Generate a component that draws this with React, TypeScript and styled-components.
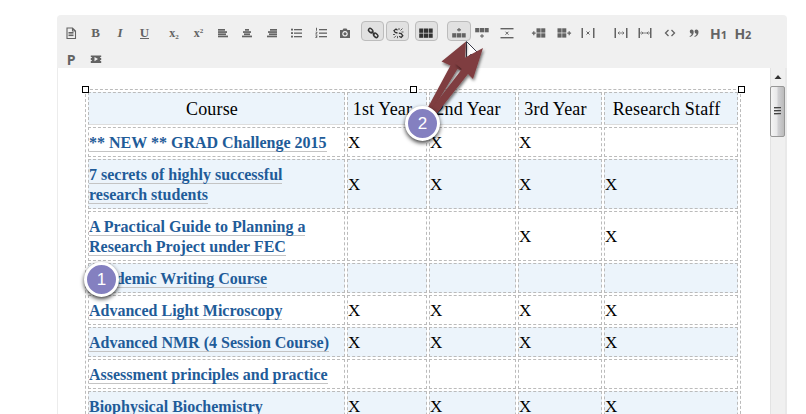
import React from "react";
import styled, { createGlobalStyle } from "styled-components";

const GlobalStyle = createGlobalStyle`
  * { box-sizing: border-box; }
  html, body { margin: 0; padding: 0; background: #fff; overflow: hidden; }
`;

const Page = styled.main`
  position: relative;
  width: 806px;
  height: 414px;
  padding: 15px 0 0 57px;
  overflow: hidden;
  background: #fff;
`;

const Editor = styled.section`
  width: 730px;
  height: 399px;
  display: flex;
  flex-direction: column;
`;

const Toolbar = styled.header`
  height: 53px;
  flex: none;
  padding: 6px 0 0 2px;
  background: #f0f0f0;
  border-radius: 4px 4px 0 0;
`;

const ToolRow = styled.div<{ $gap?: number }>`
  display: flex;
  height: 20px;
  margin-bottom: ${(p) => p.$gap ?? 0}px;
`;

const Tool = styled.button<{ $lead?: number; $active?: boolean }>`
  flex: none;
  width: ${(p) => (p.$active ? 23.5 : 24.45)}px;
  height: ${(p) => (p.$active ? 20 : 24)}px;
  margin: 0 0 0 ${(p) => p.$lead ?? 0}px;
  padding: ${(p) => (p.$active ? "3px 0 0" : "4px 0 0")};
  display: flex;
  align-items: flex-start;
  justify-content: center;
  border: ${(p) => (p.$active ? "1px solid #bcbcbc" : "0")};
  border-radius: 4px;
  background: ${(p) => (p.$active ? "#e1e1e1" : "transparent")};
  color: #636363;
`;

const Glyph = styled.svg<{ $dark?: boolean }>`
  display: block;
  width: 16px;
  height: 16px;
  flex: none;
  overflow: visible;
  color: ${(p) => (p.$dark ? "#333" : "inherit")};
  fill: currentColor;
  stroke: none;
`;

const Letter = styled.span<{ $italic?: boolean; $underline?: boolean; $weight?: number }>`
  font: ${(p) => (p.$italic ? "italic" : "normal")} ${(p) => p.$weight ?? 700} 13px/16px "Liberation Serif", serif;
  border-bottom: ${(p) => (p.$underline ? "1px solid #666" : "0")};
  height: ${(p) => (p.$underline ? 14 : 16)}px;
`;

const Script = styled.span<{ $raise?: boolean }>`
  font: bold 12px/17px "Liberation Serif", serif;
  small {
    position: relative;
    top: ${(p) => (p.$raise ? -4 : 2)}px;
    font-size: 7px;
    line-height: 0;
  }
`;

const Heading = styled.span`
  font: bold 14px/17px "Open Sans", sans-serif;
  small { font-size: 11px; }
`;

const Body = styled.div`
  flex: 1;
  min-height: 0;
  display: flex;
  justify-content: space-between;
  border-left: 1px solid #ececec;
`;

const Content = styled.div`
  position: relative;
  padding: 21px 0 0 27px;
`;

const CourseTable = styled.table`
  width: 656px;
  table-layout: fixed;
  border: 1px dashed #bbb;
  border-collapse: separate;
  border-spacing: 2px;
  font-family: "Liberation Serif", serif;
  color: #000;
`;

const Row = styled.tr<{ $tinted?: boolean; $height: number }>`
  height: ${(p) => p.$height}px;
  background: ${(p) => (p.$tinted ? "#ecf4fb" : "#fff")};
`;

const HeadCell = styled.th`
  padding: 1px 9px 0 0;
  border: 1px dashed #bbb;
  border-bottom: 1px solid #ddd;
  font-size: 18px;
  font-weight: 400;
  line-height: 20px;
  letter-spacing: 0.18px;
  text-align: center;
  white-space: nowrap;
`;

const Cell = styled.td`
  padding: 2px 0 0;
  border: 1px dashed #bbb;
  font-size: 17px;
  line-height: 20px;
  vertical-align: middle;
  white-space: nowrap;
`;

const CourseLink = styled.a`
  border-bottom: 1px solid #c4c4c4;
  color: #1f5c99;
  font-size: 16px;
  font-weight: 700;
  text-decoration: none;
`;

const Handle = styled.i<{ $x: number }>`
  position: absolute;
  top: 18px;
  left: ${(p) => p.$x}px;
  width: 7px;
  height: 7px;
  border: 1px solid #000;
  background: #fff;
`;

const Scrollbar = styled.div`
  width: 17px;
  display: flex;
  flex-direction: column;
  align-items: flex-start;
  border-left: 1px solid #e3e3e3;
  border-right: 2px solid #e9e9e9;
  background: #f0f0f0;
`;

const ScrollUp = styled.svg`
  width: 15px;
  height: 18px;
  display: block;
  flex: none;
`;

const Thumb = styled.div`
  width: 15px;
  height: 51px;
  margin-left: -1px;
  padding: 20px 3px 0;
  display: flex;
  flex-direction: column;
  gap: 1px;
  border: 1px solid #979797;
  border-radius: 2px;
  background: linear-gradient(90deg, #f5f5f5, #e8e8e9 45%, #d0d0d3 55%, #bbb);
`;

const Grip = styled.i`
  width: 7px;
  height: 2px;
  border-top: 1px solid #444;
  background: #aaa;
`;

const Marker = styled.b<{ $x: number; $y: number }>`
  position: absolute;
  left: ${(p) => p.$x - 17.5}px;
  top: ${(p) => p.$y - 17.5}px;
  width: 35px;
  height: 35px;
  border: 3px solid #fff;
  border-radius: 50%;
  background: #8480c0;
  box-shadow: 0 2px 4px rgba(0, 0, 0, 0.75);
  color: #fff;
  font: 17px/29px "Liberation Sans", sans-serif;
  text-align: center;
`;

const Arrows = styled.svg`
  position: absolute;
  left: 410px;
  top: 30px;
  width: 90px;
  height: 105px;
  pointer-events: none;
`;

const stroke = { fill: "none", stroke: "currentColor" };

function Bars({ xs, ws }: { xs: number[]; ws: number[] }) {
  return (
    <Glyph viewBox="0 0 16 16">
      {xs.map((x, i) => (
        <rect key={i} x={x} y={4 + i * 2.2} width={ws[i]} height="1.7" />
      ))}
    </Glyph>
  );
}

function Cells({ x, y, cols, rows }: { x: number; y: number; cols: number; rows: number }) {
  return (
    <>
      {Array.from({ length: cols * rows }, (_, i) => (
        <rect key={i} x={x + (i % cols) * 4.7} y={y + Math.floor(i / cols) * 5} width="4.1" height="4.3" />
      ))}
    </>
  );
}

function ListIcon({ numbered }: { numbered?: boolean }) {
  return (
    <Glyph viewBox="0 0 16 16">
      {[4, 7.5, 11].map((y, i) => (
        <g key={y}>
          <rect x="6" y={y} width="8" height="1.3" />
          {numbered ? (
            <path d={i === 0 ? "M3 2.8h1v3H3z" : `M2.4 ${y - 0.8}h2v1.2L3.3 ${y + 1.4}h1.1v.7h-2v-.9l1.1-1.4H2.4z`} />
          ) : (
            <rect x="3" y={y - 0.3} width="2" height="1.8" />
          )}
        </g>
      ))}
    </Glyph>
  );
}

function ColumnMark({ kind }: { kind: "delete" | "split" | "merge" }) {
  return (
    <Glyph viewBox="0 0 16 16">
      <rect x="1.5" y="3" width="1.5" height="10" />
      <rect x="13" y="3" width="1.5" height="10" />
      {kind === "delete" && <path {...stroke} d="M6.5 6.5l3 3M9.5 6.5l-3 3" />}
      {kind === "split" && <path {...stroke} strokeWidth=".8" d="M5 8h6M6.5 6.5L5 8l1.5 1.5M9.5 6.5L11 8 9.5 9.5" />}
      {kind === "merge" && <path {...stroke} strokeWidth=".8" d="M3 8h10M4.5 6.5L6 8 4.5 9.5M11.5 6.5L10 8l1.5 1.5" />}
    </Glyph>
  );
}

function EditorToolbar() {
  return (
    <Toolbar>
      <ToolRow $gap={6}>
        <Tool aria-label="Source">
          <Glyph viewBox="0 0 16 16">
            <path {...stroke} strokeWidth="1.1" d="M4 3h5.5L12.5 6v7.5H4zM9.5 3v3h3" />
            <rect x="5.5" y="7" width="5" height="1.6" /><rect x="5.5" y="9.5" width="5" height="1.6" />
          </Glyph>
        </Tool>
        <Tool><Letter>B</Letter></Tool>
        <Tool><Letter $italic>I</Letter></Tool>
        <Tool><Letter $underline>U</Letter></Tool>
        <Tool $lead={5}><Script>x<small>2</small></Script></Tool>
        <Tool><Script $raise>x<small>2</small></Script></Tool>
        <Tool aria-label="Align left"><Bars xs={[3, 3, 3, 3]} ws={[7, 9, 8, 10]} /></Tool>
        <Tool aria-label="Align centre"><Bars xs={[6, 4, 5, 3]} ws={[4, 8, 6, 10]} /></Tool>
        <Tool aria-label="Align right"><Bars xs={[6, 4, 5, 3]} ws={[7, 9, 8, 10]} /></Tool>
        <Tool aria-label="Bulleted list"><ListIcon /></Tool>
        <Tool aria-label="Numbered list"><ListIcon numbered /></Tool>
        <Tool aria-label="Image">
          <Glyph viewBox="0 0 16 16">
            <path fillRule="evenodd" d="M3 5h2.5l1-1.5h3l1 1.5H13v8H3zM8 6a2.8 2.8 0 1 0 .01 0zM8 7.2a1.6 1.6 0 1 1-.01 0z" />
          </Glyph>
        </Tool>
        <Tool $lead={3.5} $active aria-label="Link">
          <Glyph viewBox="0 0 16 16" $dark>
            <g {...stroke} strokeWidth="1.5">
              <rect x="3.2" y="4" width="5" height="3.2" rx="1.6" transform="rotate(43 5.7 5.6)" />
              <rect x="8.2" y="8.7" width="5" height="3.2" rx="1.6" transform="rotate(43 10.7 10.3)" />
              <path d="M6.5 6.5l3.2 3" />
            </g>
          </Glyph>
        </Tool>
        <Tool $lead={1.7} $active aria-label="Unlink">
          <Glyph viewBox="0 0 16 16" $dark>
            <path {...stroke} strokeWidth="1.3" d="M7.5 5.2L6 4 4 5.6 5.2 7.5 7.5 8M8.8 8.2l2.4.4 1.6 2.2-1.6 1.7-2-1.2" />
            <path {...stroke} strokeWidth=".8" d="M9 3v2M12.5 3.5L10.5 5.5M13.5 7H11.5M3 9.5h2M4 12.8L6 10.8M7.5 11.2v2" />
          </Glyph>
        </Tool>
        <Tool $lead={5.3} $active aria-label="Table">
          <Glyph viewBox="0 0 16 16" $dark><Cells x={1.2} y={3.5} cols={3} rows={2} /></Glyph>
        </Tool>
        <Tool $lead={9.2} $active aria-label="Insert row above">
          <Glyph viewBox="0 0 16 16"><Cells x={1.2} y={8.2} cols={3} rows={1} /><path d="M7.4 3h1.2v1.2H10v1.2H8.6v1.2H7.4V5.4H6V4.2h1.4z" /></Glyph>
        </Tool>
        <Tool $lead={-0.8} aria-label="Insert row below">
          <Glyph viewBox="0 0 16 16"><Cells x={1.2} y={3} cols={3} rows={1} /><path d="M7.4 9.2h1.2v1.2H10v1.2H8.6v1.2H7.4v-1.2H6v-1.2h1.4z" /></Glyph>
        </Tool>
        <Tool aria-label="Delete row">
          <Glyph viewBox="0 0 16 16">
            <rect x="1.5" y="3" width="13" height="1.4" /><rect x="1.5" y="12" width="13" height="1.4" />
            <path {...stroke} d="M6.5 6.7l3 3M9.5 6.7l-3 3" />
          </Glyph>
        </Tool>
        <Tool $lead={8.2} aria-label="Insert column before">
          <Glyph viewBox="0 0 16 16"><Cells x={5.5} y={3.3} cols={2} rows={2} /><path d="M2.2 6.2h1.2v1.4h1.3v1.2H3.4v1.4H2.2V8.8H.9V7.6h1.3z" /></Glyph>
        </Tool>
        <Tool aria-label="Insert column after">
          <Glyph viewBox="0 0 16 16"><Cells x={1.5} y={3.3} cols={2} rows={2} /><path d="M12.6 6.2h1.2v1.4h1.3v1.2h-1.3v1.4h-1.2V8.8h-1.3V7.6h1.3z" /></Glyph>
        </Tool>
        <Tool aria-label="Delete column"><ColumnMark kind="delete" /></Tool>
        <Tool $lead={8} aria-label="Split cell"><ColumnMark kind="split" /></Tool>
        <Tool aria-label="Merge cells"><ColumnMark kind="merge" /></Tool>
        <Tool aria-label="Code"><Glyph viewBox="0 0 16 16"><path {...stroke} strokeWidth="1.3" d="M6.5 5l-3 3 3 3M9.5 5l3 3-3 3" /></Glyph></Tool>
        <Tool aria-label="Quote">
          <Glyph viewBox="0 0 16 16">
            <path d="M5.6 4.5c1.4 0 2.1 1 2.1 2.4 0 2.6-1.5 4.3-3.8 5l-.3-.8c1.3-.6 2.1-1.4 2.2-2.4C4.600 8.700 3.800 7.800 3.800 6.600 3.800 5.400 4.500 4.500 5.600 4.500zM10.400 4.500c1.400 0 2.100 1 2.100 2.400 0 2.600-1.500 4.300-3.800 5l-.3-.8c1.300-.6 2.100-1.400 2.200-2.400-1.200 0-2-.9-2-2.100 0-1.200.7-2.100 1.800-2.100z" />
          </Glyph>
        </Tool>
        <Tool><Heading>H<small>1</small></Heading></Tool>
        <Tool><Heading>H<small>2</small></Heading></Tool>
      </ToolRow>
      <ToolRow>
        <Tool><Heading>P</Heading></Tool>
        <Tool aria-label="Video">
          <Glyph viewBox="0 0 16 16">
            <path fillRule="evenodd" d="M2.800 4.500h10.400v1.500h-1v1h1v2h-1v1h1v2H2.800v-2h1V9h-1V7h1V6h-1zM6.500 6v4.200L10 8.100z" />
          </Glyph>
        </Tool>
      </ToolRow>
    </Toolbar>
  );
}

const columnWidths = [257, 80, 87, 84, 134];
const headings = ["Course", "1st Year", "2nd Year", "3rd Year", "Research Staff"];

const courses: { lines: string[]; marks: string }[] = [
  { lines: ["** NEW ** GRAD Challenge 2015"], marks: "XXX " },
  { lines: ["7 secrets of highly successful", "research students"], marks: "XXXX" },
  { lines: ["A Practical Guide to Planning a", "Research Project under FEC"], marks: "  XX" },
  { lines: ["Academic Writing Course"], marks: "    " },
  { lines: ["Advanced Light Microscopy"], marks: "XXXX" },
  { lines: ["Advanced NMR (4 Session Course)"], marks: "XXXX" },
  { lines: ["Assessment principles and practice"], marks: "    " },
  { lines: ["Biophysical Biochemistry"], marks: "XXXX" },
];

export default function App() {
  return (
    <Page>
      <GlobalStyle />
      <Editor>
        <EditorToolbar />
        <Body>
          <Content>
            <CourseTable>
              <colgroup>{columnWidths.map((w, i) => <col key={i} width={w} />)}</colgroup>
              <thead>
                <Row $tinted $height={33}>{headings.map((h) => <HeadCell key={h}>{h}</HeadCell>)}</Row>
              </thead>
              <tbody>
                {courses.map(({ lines, marks }, r) => (
                  <Row key={r} $tinted={r % 2 === 1} $height={lines.length > 1 ? 50 : 30}>
                    <Cell>
                      <CourseLink>
                        {lines.map((line, i) => <React.Fragment key={line}>{i > 0 && <br />}{line}</React.Fragment>)}
                      </CourseLink>
                    </Cell>
                    {marks.split("").map((m, c) => <Cell key={c}>{m.trim()}</Cell>)}
                  </Row>
                ))}
              </tbody>
            </CourseTable>
            <Handle $x={24} />
            <Handle $x={352} />
            <Handle $x={680} />
          </Content>
          <Scrollbar>
            <ScrollUp viewBox="0 0 15 18"><path d="M7 7l3.500 4h-7z" fill="#333" /></ScrollUp>
            <Thumb><Grip /><Grip /><Grip /></Thumb>
          </Scrollbar>
        </Body>
      </Editor>
      <Arrows viewBox="410 30 90 105">
        <defs>
          <filter id="shade" x="-20%" y="-20%" width="150%" height="150%">
            <feDropShadow dx="1" dy="2" stdDeviation="1.6" floodOpacity=".55" />
          </filter>
        </defs>
        <path d="M466.500 41.500v17l4-4h9z" fill="#fff" stroke="#223" strokeWidth=".9" />
        <path filter="url(#shade)" fill="#7f3d40" d="M466 41.500L441.500 61.500 450.500 65.500 420 122 424 124 457.500 69 464 72z" />
        <path filter="url(#shade)" fill="#7f3d40" d="M483 48L455 63 462 69 422 121 427 126 468 74 473 79z" />
      </Arrows>
      <Marker $x={101.5} $y={279.5}>1</Marker>
      <Marker $x={422.5} $y={123.5}>2</Marker>
    </Page>
  );
}
